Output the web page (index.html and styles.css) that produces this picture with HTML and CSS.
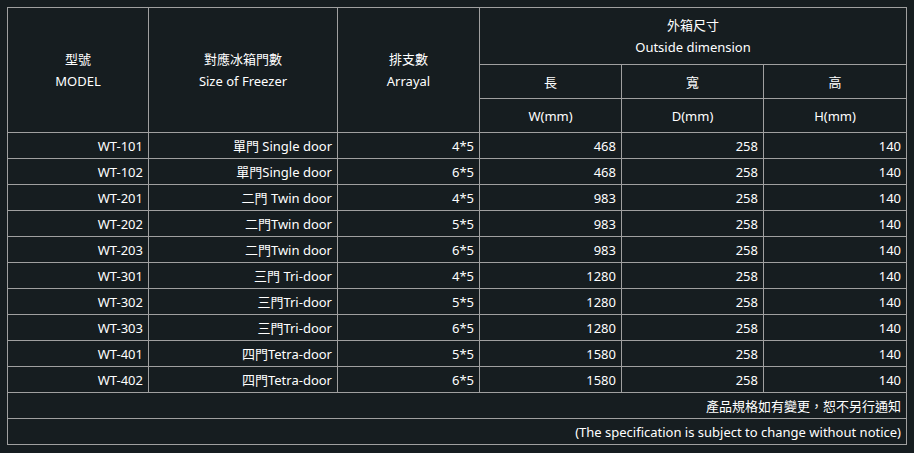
FILE: index.html
```html
<!DOCTYPE html>
<html lang="zh-Hant">
<head>
<meta charset="utf-8">
<title>規格表</title>
<link rel="stylesheet" href="styles.css">
</head>
<body>
<table class="spec">
  <colgroup>
    <col class="c1"><col class="c2"><col class="c3"><col class="c4"><col class="c5"><col class="c6">
  </colgroup>
  <thead>
    <tr class="h1">
      <th rowspan="3"><span class="ln">型號</span><span class="ln">MODEL</span></th>
      <th rowspan="3"><span class="ln">對應冰箱門數</span><span class="ln">Size of Freezer</span></th>
      <th rowspan="3"><span class="ln">排支數</span><span class="ln">Arrayal</span></th>
      <th colspan="3"><span class="ln">外箱尺寸</span><span class="ln">Outside dimension</span></th>
    </tr>
    <tr class="h2">
      <th>長</th><th>寬</th><th>高</th>
    </tr>
    <tr class="h2">
      <th>W(mm)</th><th>D(mm)</th><th>H(mm)</th>
    </tr>
  </thead>
  <tbody>
    <tr><td>WT-101</td><td>單門 Single door</td><td>4*5</td><td>468</td><td>258</td><td>140</td></tr>
    <tr><td>WT-102</td><td>單門Single door</td><td>6*5</td><td>468</td><td>258</td><td>140</td></tr>
    <tr><td>WT-201</td><td>二門 Twin door</td><td>4*5</td><td>983</td><td>258</td><td>140</td></tr>
    <tr><td>WT-202</td><td>二門Twin door</td><td>5*5</td><td>983</td><td>258</td><td>140</td></tr>
    <tr><td>WT-203</td><td>二門Twin door</td><td>6*5</td><td>983</td><td>258</td><td>140</td></tr>
    <tr><td>WT-301</td><td>三門 Tri-door</td><td>4*5</td><td>1280</td><td>258</td><td>140</td></tr>
    <tr><td>WT-302</td><td>三門Tri-door</td><td>5*5</td><td>1280</td><td>258</td><td>140</td></tr>
    <tr><td>WT-303</td><td>三門Tri-door</td><td>6*5</td><td>1280</td><td>258</td><td>140</td></tr>
    <tr><td>WT-401</td><td>四門Tetra-door</td><td>5*5</td><td>1580</td><td>258</td><td>140</td></tr>
    <tr><td>WT-402</td><td>四門Tetra-door</td><td>6*5</td><td>1580</td><td>258</td><td>140</td></tr>
    <tr><td colspan="6">產品規格如有變更，恕不另行通知</td></tr>
    <tr><td colspan="6">(The specification is subject to change without notice)</td></tr>
  </tbody>
</table>
</body>
</html>
```
FILE: styles.css
```css
html, body {
  background: #161d20;
}
body {
  margin: 7px;
  color: #ffffff;
  font-family: "Noto Sans", "Noto Sans CJK TC", sans-serif;
  font-size: 13px;
}
.spec {
  border-collapse: collapse;
  table-layout: fixed;
  width: 900px;
}
.c1 { width: 141px; }
.c2 { width: 189px; }
.c3 { width: 142px; }
.c4 { width: 142px; }
.c5 { width: 142px; }
.c6 { width: 143px; }
.spec th, .spec td {
  border: 1px solid #a0a0a0;
  padding: 0 5px;
  line-height: 18px;
}
.spec th {
  font-weight: normal;
  text-align: center;
  vertical-align: middle;
}
.ln {
  display: block;
  line-height: 22px;
}
.h1 th { height: 56px; }
.h2 th { height: 33px; }
.spec td {
  height: 25px;
  text-align: right;
}
```
